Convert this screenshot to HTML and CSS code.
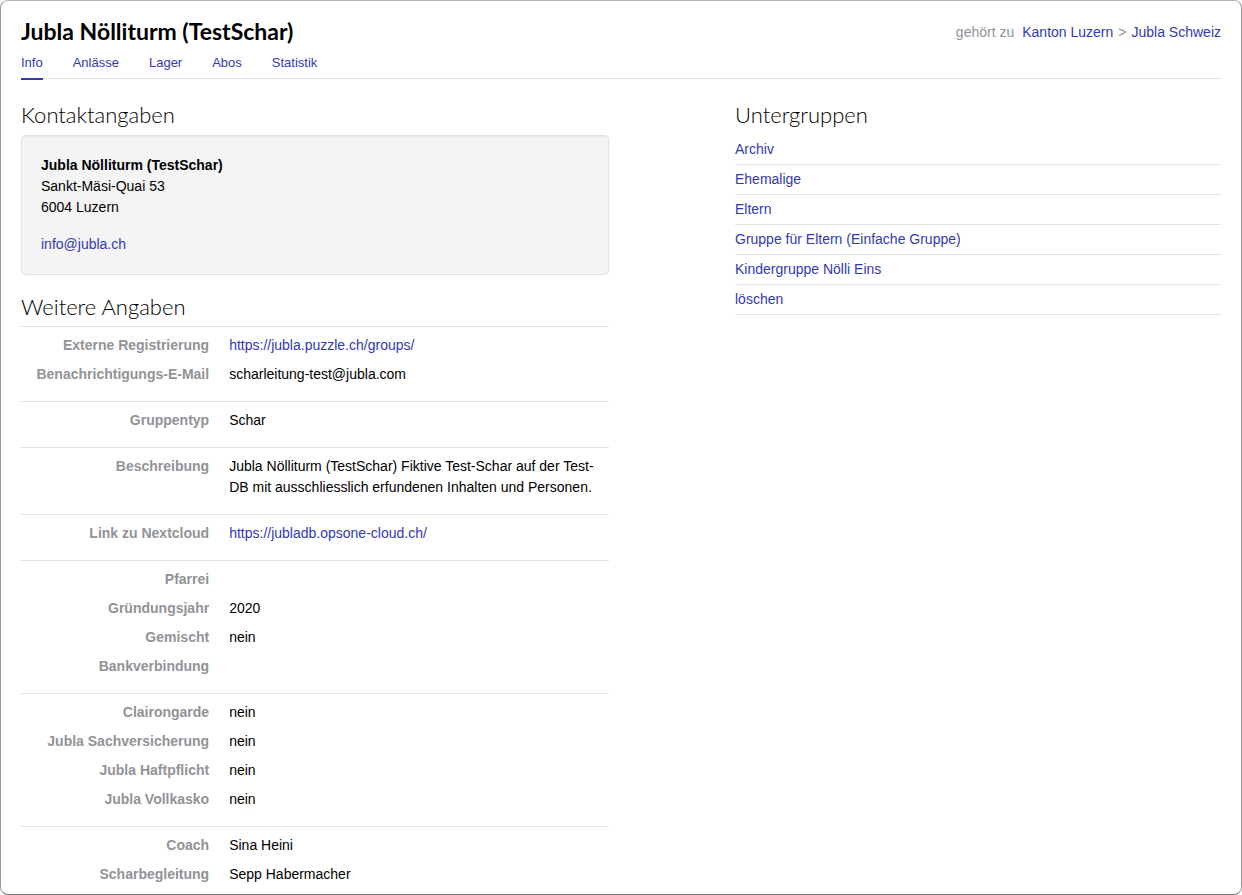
FILE: index.html
```html
<!DOCTYPE html>
<html lang="de">
<head>
<meta charset="utf-8">
<meta name="viewport" content="width=device-width, initial-scale=1">
<title>Jubla Nölliturm (TestSchar)</title>
<link rel="stylesheet" href="styles.css">
</head>
<body>
<div class="page">
  <header class="page-header">
    <h1 class="title">Jubla Nölliturm (TestSchar)</h1>
    <div class="breadcrumb">
      <span class="breadcrumb-label">gehört zu</span>
      <a href="#">Kanton Luzern</a>
      <span>&gt;</span>
      <a href="#">Jubla Schweiz</a>
    </div>
  </header>
  <nav class="tabs">
    <a class="tab tab-active" href="#">Info</a>
    <a class="tab" href="#">Anlässe</a>
    <a class="tab" href="#">Lager</a>
    <a class="tab" href="#">Abos</a>
    <a class="tab" href="#">Statistik</a>
  </nav>
  <main class="columns">
    <div class="main-column">
      <section>
        <h2 class="heading">Kontaktangaben</h2>
        <div class="well">
          <address class="address"><strong>Jubla Nölliturm (TestSchar)</strong><br>Sankt-Mäsi-Quai 53<br>6004 Luzern</address>
          <a href="#">info@jubla.ch</a>
        </div>
      </section>
      <section class="details">
        <h2 class="heading">Weitere Angaben</h2>
        <dl class="group">
          <dt>Externe Registrierung</dt><dd><a href="#">https://jubla.puzzle.ch/groups/</a></dd>
          <dt>Benachrichtigungs-E-Mail</dt><dd>scharleitung-test@jubla.com</dd>
        </dl>
        <dl class="group">
          <dt>Gruppentyp</dt><dd>Schar</dd>
        </dl>
        <dl class="group">
          <dt>Beschreibung</dt><dd>Jubla Nölliturm (TestSchar) Fiktive Test-Schar auf der Test-DB mit ausschliesslich erfundenen Inhalten und Personen.</dd>
        </dl>
        <dl class="group">
          <dt>Link zu Nextcloud</dt><dd><a href="#">https://jubladb.opsone-cloud.ch/</a></dd>
        </dl>
        <dl class="group">
          <dt>Pfarrei</dt><dd></dd>
          <dt>Gründungsjahr</dt><dd>2020</dd>
          <dt>Gemischt</dt><dd>nein</dd>
          <dt>Bankverbindung</dt><dd></dd>
        </dl>
        <dl class="group">
          <dt>Clairongarde</dt><dd>nein</dd>
          <dt>Jubla Sachversicherung</dt><dd>nein</dd>
          <dt>Jubla Haftpflicht</dt><dd>nein</dd>
          <dt>Jubla Vollkasko</dt><dd>nein</dd>
        </dl>
        <dl class="group">
          <dt>Coach</dt><dd>Sina Heini</dd>
          <dt>Scharbegleitung</dt><dd>Sepp Habermacher</dd>
        </dl>
      </section>
    </div>
    <section class="side-column">
      <h2 class="heading">Untergruppen</h2>
      <ul class="subgroups">
        <li><a href="#">Archiv</a></li>
        <li><a href="#">Ehemalige</a></li>
        <li><a href="#">Eltern</a></li>
        <li><a href="#">Gruppe für Eltern (Einfache Gruppe)</a></li>
        <li><a href="#">Kindergruppe Nölli Eins</a></li>
        <li><a href="#">löschen</a></li>
      </ul>
    </section>
  </main>
</div>
</body>
</html>
```
FILE: styles.css
```css
* {
  box-sizing: border-box;
}

body {
  margin: 0;
  background: #fff;
  color: #000;
  font-family: "Liberation Sans", Arial, sans-serif;
  font-size: 14px;
  line-height: 21px;
}

a {
  color: #3239b4;
  text-decoration: none;
}

a:hover {
  text-decoration: underline;
}

.page {
  min-height: 100vh;
  padding: 15px 20px 0;
  border: 1px solid #98979d;
  border-top-color: #b5b4bb;
  border-bottom-color: #7d7c85;
  border-radius: 8px;
}

.page-header {
  display: flex;
  justify-content: space-between;
  align-items: flex-start;
}

.title {
  margin: 0;
  font-family: "Century Gothic", Lato, sans-serif;
  font-size: 23px;
  font-weight: 700;
  line-height: 30px;
}

.breadcrumb {
  display: flex;
  gap: 5px;
  padding-top: 6px;
  color: #929298;
}

.breadcrumb-label {
  margin-right: 3px;
}

.tabs {
  display: flex;
  gap: 30px;
  height: 33px;
  border-bottom: 1px solid #e0e0e6;
  font-size: 13px;
}

.tab {
  height: 34px;
  padding-top: 6px;
}

.tab-active {
  border-bottom: 2px solid #3239b4;
}

.columns {
  display: flex;
  justify-content: space-between;
  padding-top: 17px;
}

.main-column {
  width: 49%;
}

.side-column {
  width: 40.5%;
}

.heading {
  margin: 0;
  font-family: "Century Gothic", Lato, sans-serif;
  font-size: 22px;
  font-weight: 300;
  line-height: 38px;
}

.well {
  margin-top: 1px;
  padding: 19px;
  border: 1px solid #e2e2e2;
  border-radius: 4px;
  background: #f4f4f4;
  box-shadow: inset 0 1px 1px rgba(0, 0, 0, 0.05);
}

.well a {
  display: block;
}

.address {
  margin-bottom: 16px;
  font-style: normal;
}

.details {
  margin-top: 13px;
}

.group {
  display: grid;
  grid-template-columns: 32% 1fr;
  gap: 8px 20px;
  margin: 0;
  padding: 8px 0 16px;
  border-top: 1px solid #e0e0e6;
}

.group:last-child {
  padding-bottom: 8px;
}

.group dt {
  color: #929298;
  font-weight: 700;
  text-align: right;
}

.group dd {
  margin: 0;
}

.subgroups {
  margin: 1px 0 0;
  padding: 0;
  list-style: none;
}

.subgroups li {
  padding: 4px 0;
  border-bottom: 1px solid #e0e0e6;
}
```
